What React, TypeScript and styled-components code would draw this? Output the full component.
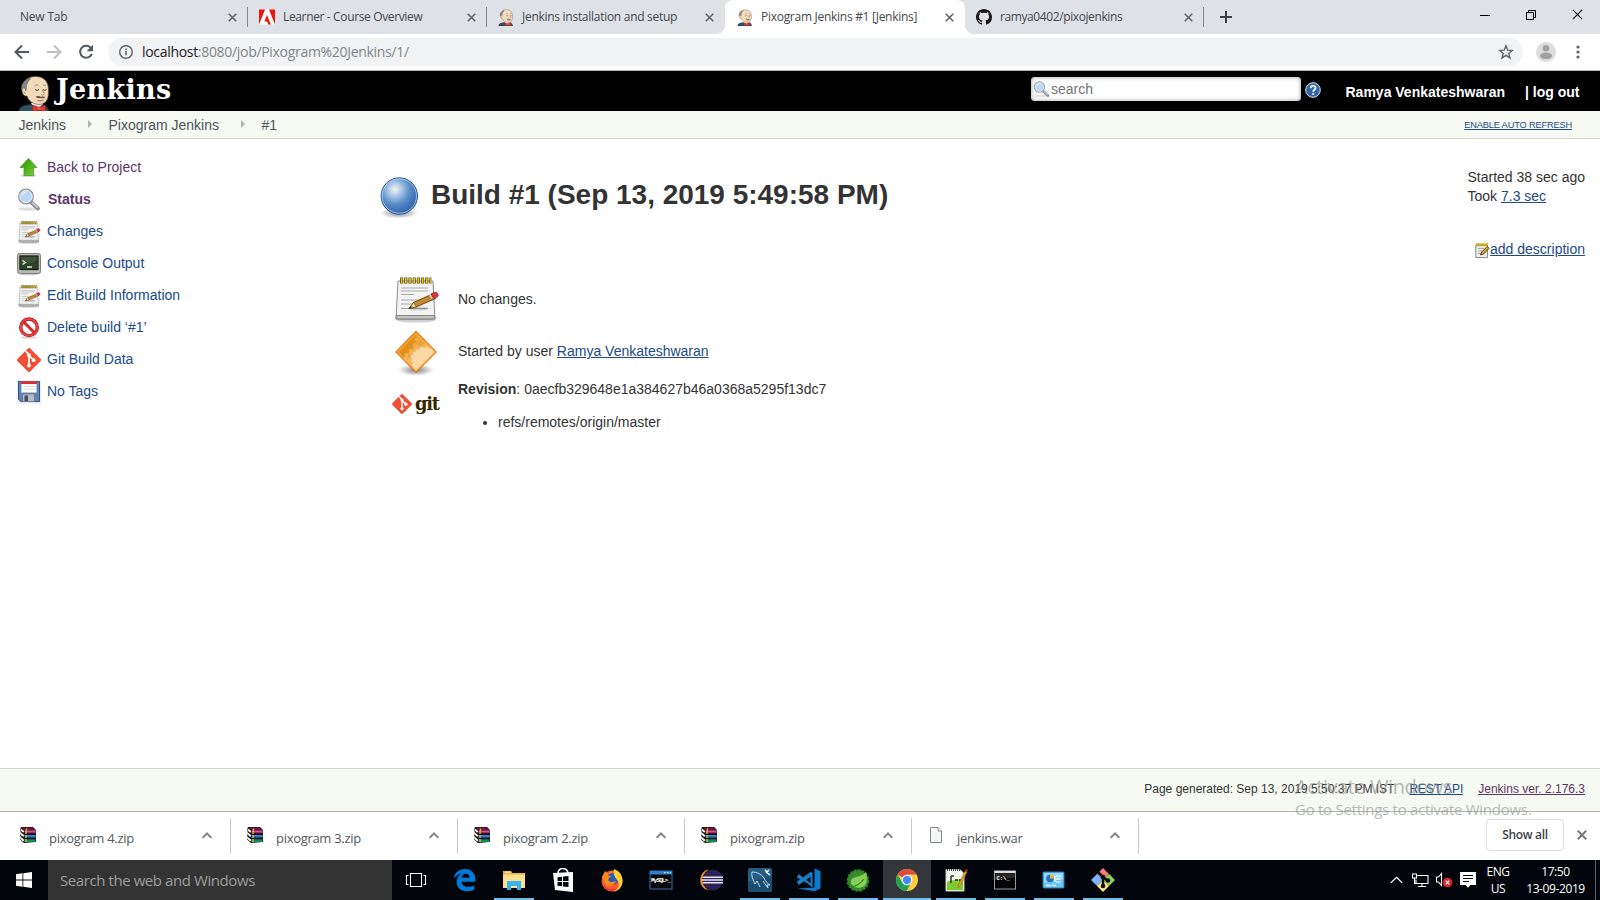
import React from "react";
import styled, { createGlobalStyle } from "styled-components";

const Global = createGlobalStyle`
  * { box-sizing: border-box; }
  html, body { margin: 0; padding: 0; background: #fff; overflow: hidden; }
  svg { display: block; flex: none; }
`;

const ui = `"Open Sans", "Noto Sans", sans-serif`;
const page = `"Liberation Sans", Arial, sans-serif`;

const Screen = styled.div`
  width: 1600px;
  height: 900px;
  display: flex;
  flex-direction: column;
  position: relative;
  overflow: hidden;
  white-space: nowrap;
  font-family: ${page};
  font-size: 14px;
  color: #333;
`;

/* Browser tabs */
const TabStrip = styled.div`
  height: 34px;
  flex: none;
  display: flex;
  background: #dee1e6;
`;
const Tab = styled.div<{ $w: number; $active?: boolean; $line?: boolean; $pad: number }>`
  width: ${(p) => p.$w}px;
  height: 34px;
  display: flex;
  align-items: center;
  padding: 0 11px 0 ${(p) => p.$pad}px;
  position: relative;
  background: ${(p) => (p.$active ? "#fff" : "transparent")};
  border-radius: 8px 8px 0 0;
  &::after {
    content: "";
    display: ${(p) => (p.$line ? "block" : "none")};
    position: absolute;
    right: 0;
    top: 7px;
    width: 1px;
    height: 20px;
    background: #80868b;
  }
`;
const Flare = styled.i<{ $side: "left" | "right" }>`
  position: absolute;
  bottom: 0;
  ${(p) => p.$side}: -8px;
  width: 8px;
  height: 8px;
  background: radial-gradient(circle at ${(p) => (p.$side === "left" ? "0 0" : "100% 0")}, transparent 7.5px, #fff 8px);
`;
const TabTitle = styled.span<{ $ls?: number; $gap?: number }>`
  flex: 1;
  margin-left: ${(p) => p.$gap ?? 0}px;
  font: 12px/16px ${ui};
  letter-spacing: ${(p) => p.$ls ?? -0.2}px;
  color: #45494d;
`;
const NewTab = styled.div`
  width: 44px;
  display: flex;
  align-items: center;
  justify-content: center;
`;
const WindowButtons = styled.div`
  margin-left: auto;
  display: flex;
  width: 138px;
  height: 29px;
`;
const WindowButton = styled.div`
  width: 46px;
  display: flex;
  align-items: center;
  justify-content: center;
`;

/* Browser toolbar */
const Toolbar = styled.div`
  height: 37px;
  flex: none;
  display: flex;
  align-items: center;
  background: #fff;
  border-bottom: 1px solid #b6bab6;
  padding: 0 11px 0 12px;
`;
const NavButton = styled.div`
  width: 32px;
  padding-left: 2px;
`;
const Omnibox = styled.div`
  width: 1415px;
  height: 28px;
  border-radius: 14px;
  background: #f1f3f4;
  display: flex;
  align-items: center;
  padding: 0 9px 0 10px;
`;
const Url = styled.span`
  flex: 1;
  margin-left: 8px;
  font: 14px/20px ${ui};
  letter-spacing: -0.31px;
  color: #80868b;
  b { font-weight: 400; color: #202124; }
`;
const ToolbarEnd = styled.div`
  margin-left: 13px;
  display: flex;
  align-items: center;
  gap: 20px;
`;

/* Jenkins header */
const Header = styled.header`
  height: 40px;
  flex: none;
  background: #000;
  display: flex;
  padding: 0 20.5px 0 18px;
  color: #fff;
`;
const Wordmark = styled.span`
  margin: 1px 0 0 5px;
  font: bold 27px/36px "DejaVu Serif", serif;
  letter-spacing: 0.3px;
`;
const SearchBox = styled.div`
  width: 270px;
  height: 24px;
  margin: 6px 0 0 auto;
  border-radius: 4px;
  background: #fff;
  box-shadow: inset 0 0 4px #999;
  display: flex;
  align-items: center;
  padding-left: 2px;
  color: #757575;
  gap: 1.5px;
`;
const Help = styled.div`
  margin: 11px 25px 0 4px;
`;
const HeaderLink = styled.b<{ $gap?: number }>`
  margin: 13px 0 0 ${(p) => p.$gap ?? 0}px;
  line-height: 16px;
`;

const Crumbs = styled.nav`
  height: 28px;
  flex: none;
  display: flex;
  align-items: center;
  background: #f6faf2;
  border-bottom: 1px solid #d3d7cf;
  padding: 0 28px 1px 18.5px;
  color: #4d545d;
`;
const Crumb = styled.span`
  line-height: 16px;
  padding-top: 1px;
`;
const CrumbArrow = styled.i`
  margin: 0 16.2px 0 22.3px;
  border: solid transparent;
  border-width: 4px 0 4px 4.5px;
  border-left-color: #b0b4b0;
`;
const AutoRefresh = styled.a`
  margin-left: auto;
  padding-top: 1px;
  font-size: 9.3px;
  letter-spacing: -0.19px;
  color: #204a87;
  text-decoration: underline;
`;

/* Page content */
const Content = styled.div`
  height: 629px;
  flex: none;
  display: flex;
`;
const Side = styled.aside`
  width: 379px;
  padding: 12px 0 0 17px;
`;
const Task = styled.div<{ $visited?: boolean; $current?: boolean }>`
  height: 32px;
  display: flex;
  align-items: center;
  gap: ${(p) => (p.$current ? 7 : 6)}px;
  color: ${(p) => (p.$visited ? "#5c3566" : "#204a87")};
  font-weight: ${(p) => (p.$current ? 700 : 400)};
  svg { position: relative; top: 1px; }
`;
const Main = styled.main`
  flex: 1;
  padding: 29px 15px 0 0;
  display: flex;
  justify-content: space-between;
`;
const Title = styled.h1`
  margin: 7px 0 0;
  height: 44px;
  display: flex;
  align-items: flex-start;
  gap: 12px;
  font-size: 28px;
  line-height: 40px;
  font-weight: 700;
  letter-spacing: -0.01px;
`;
const Facts = styled.div`
  margin-top: 54px;
  padding-left: 13px;
`;
const Fact = styled.div<{ $h: number }>`
  height: ${(p) => p.$h}px;
  display: flex;
  align-items: center;
`;
const FactIcon = styled.div<{ $drop?: number; $indent?: number }>`
  width: 66px;
  padding: ${(p) => p.$drop ?? 0}px 0 0 ${(p) => p.$indent ?? 0}px;
`;
const Link = styled.a`
  color: #204a87;
  text-decoration: underline;
`;
const Revision = styled.div`
  line-height: 18px;
  padding-top: 2px;
`;
const Refs = styled.ul`
  margin: 15px 0 0;
  padding-left: 40px;
`;
const GitLogo = styled.div`
  width: 66px;
  display: flex;
  align-items: center;
  gap: 3px;
  color: #362701;
  font: bold 19px/24px "DejaVu Serif", serif;
  letter-spacing: -1.3px;
`;
const GitWord = styled.span`
  padding-bottom: 3px;
  transform: scaleX(0.94);
  transform-origin: 0 50%;
`;
const Meta = styled.div`
  width: 117.5px;
  line-height: 19px;
`;
const Describe = styled.div`
  margin: 34px 0 0;
  display: flex;
  align-items: center;
  gap: 0.5px;
  justify-content: flex-end;
  svg { position: relative; top: 1px; }
`;

const Footer = styled.footer`
  height: 44px;
  flex: none;
  background: #f6faf2;
  border-top: 1px solid #d3d7cf;
  display: flex;
  justify-content: flex-end;
  gap: 15px;
  padding: 13px 15px 0 0;
  font-size: 12px;
  line-height: 14px;
  border-bottom: 1px solid #b0b3b0;
  a { text-decoration: underline; color: #204a87; }
  a + a { color: #5c3566; }
`;

/* Downloads shelf */
const Shelf = styled.div`
  height: 48px;
  flex: none;
  background: #fff;
  display: flex;
  align-items: flex-start;
  padding-top: 6px;
`;
const Download = styled.div`
  width: 227px;
  height: 36px;
  border-right: 1px solid #c9c9c9;
  display: flex;
  padding: 9px 18px 0 16px;
  &:first-child { width: 231px; padding-left: 20px; }
`;
const FileName = styled.span`
  flex: 1;
  margin: 2px 0 0 13px;
  font: 13px/18px ${ui};
  letter-spacing: -0.3px;
  color: #54575b;
`;
const ShowAll = styled.div`
  margin: 1px 13px 0 auto;
  width: 78px;
  height: 32px;
  border: 1px solid #dadce0;
  border-radius: 4px;
  text-align: center;
  font: 600 12px/29px ${ui};
  letter-spacing: -0.3px;
  color: #3c4043;
`;
const ShelfClose = styled.div`
  margin: 12px 13px 0 0;
`;

/* Windows taskbar */
const Taskbar = styled.div`
  height: 40px;
  flex: none;
  display: flex;
  background: #02050b;
  color: #fff;
  font-family: ${ui};
`;
const Start = styled.div`
  width: 48px;
  display: flex;
  align-items: center;
  justify-content: center;
`;
const TaskSearch = styled.div`
  width: 344px;
  background: #333;
  color: #9d9d9d;
  padding-left: 12px;
  font-size: 15px;
  line-height: 41px;
  letter-spacing: -0.42px;
`;
const Dock = styled.div`
  display: flex;
  margin-left: -0.4px;
`;
const DockItem = styled.div<{ $running?: boolean; $active?: boolean }>`
  width: 49.07px;
  height: 40px;
  display: flex;
  align-items: center;
  justify-content: center;
  position: relative;
  background: ${(p) => (p.$active ? "linear-gradient(#33373b, #33373b) center / 48px 40px no-repeat" : "none")};
  &::after {
    content: "";
    display: ${(p) => (p.$running ? "block" : "none")};
    position: absolute;
    bottom: 0;
    left: ${(p) => (p.$active ? 0.5 : 4.5)}px;
    right: ${(p) => (p.$active ? 0.5 : 4.5)}px;
    height: 2px;
    background: #76b9ed;
  }
`;
const Tray = styled.div`
  margin-left: auto;
  display: flex;
  align-items: center;
`;
const TrayIcon = styled.div`
  width: 24px;
  display: flex;
  justify-content: center;
`;
const TrayText = styled.div<{ $w: number }>`
  width: ${(p) => p.$w}px;
  text-align: center;
  font-size: 12px;
  line-height: 17px;
  letter-spacing: -0.4px;
`;
const Desktop = styled.div`
  width: 5px;
  height: 40px;
  border-left: 1px solid #5b5d60;
`;

const Watermark = styled.div`
  position: absolute;
  left: 1295px;
  top: 773px;
  color: rgba(140, 140, 140, 0.62);
  font-family: ${ui};
`;
const WatermarkTitle = styled.div`
  font-size: 20px;
  line-height: 28px;
  letter-spacing: -0.45px;
`;
const WatermarkText = styled.div`
  font-size: 15px;
  line-height: 16px;
  letter-spacing: -0.27px;
`;

const Cross = ({ size = 9, color = "#5f6368", w = 1.7 }) => (
  <svg width={size} height={size} viewBox="0 0 10 10">
    <path d="M.8.8l8.4 8.4M9.2.8L.8 9.2" stroke={color} strokeWidth={w} />
  </svg>
);

const Butler = ({ w, h }: { w: number; h: number }) => (
  <svg width={w} height={h} viewBox="0 0 33 37">
    <path d="M1 37c0-4 2-6 8-7l14-1c5 1 7 3 8 8z" fill="#335061" stroke="#1d2f3a" />
    <path d="M13 28l5 7 7-6-3-3z" fill="#fff" />
    <path d="M4 15C3.500 7 9 1.500 17.500 1.500c8 0 13 4.500 13 13.500 0 5 0 8-2.500 11.500-3 3.500-8 3.500-12 2-3.500-1.500-6-4-7-7.500-3 .5-5-2-5-6z" fill="#f2dabb" stroke="#5a4c40" strokeWidth=".7" />
    <path d="M11 3C6 5.500 3 9 3.500 15l1.200-1.500c.8-.8 2-.5 2.500.5l.6 2c.8-2 .2-3.500.7-5.500.7-2.700 2-5 4-6.800z" fill="#85888a" stroke="#4b4d4f" strokeWidth=".5" />
    <path d="M5.500 17c1 0 1.800 1 1.700 2" fill="none" stroke="#8a6a50" strokeWidth=".7" />
    <path d="M17 14.500c1 1 3 1 4 0M25 14.500c1 1 2.500 1 3.500 0" fill="none" stroke="#4a372c" strokeWidth="1" />
    <path d="M16.500 11c1-1.300 3-1.300 4-.8M25 10.500c1-.8 2.500-.5 3 .3M24.500 14.500c0 2.300 2.500 3.500 1.500 5-.7.700-2 .7-2.700.2" fill="none" stroke="#8a6f5a" strokeWidth=".7" />
    <path d="M17.500 21.800c2-1.200 4-.8 5.500.2 1.500-.8 3.500-.5 4.500.3-1 1-3 1-4.500.6-2 .6-4.300.3-5.500-1.100z" fill="#6b4c3c" />
    <path d="M19.500 25.500c2.500.8 4.500.3 6-.7" fill="none" stroke="#8c3b30" strokeWidth=".8" />
    <path d="M14.500 30l6.500 2.500 6.500-2.500v7h-1.500l-5-2-5 2h-1.500z" fill="#d83a36" stroke="#8c1b17" strokeWidth=".7" />
    <rect x="19.300" y="31.500" width="3.500" height="3.500" fill="#ef4d48" />
  </svg>
);

const Notepad = ({ size }: { size: number }) => (
  <svg width={size} height={size} viewBox="0 0 48 48">
    <ellipse cx="24" cy="45.500" rx="19" ry="2" fill="#000" opacity=".18" />
    <path d="M6 6h35l2 38h-39z" fill="#f3f3f2" stroke="#8b8d89" />
    <path d="M4 40.500h38.500l.5 3.500h-39z" fill="#c2c2c0" stroke="#6c6e6a" strokeWidth=".8" />
    <path d="M9 13h27M9 16h27M9 19.500h13M9 25h25M9 29h20M9 33.500h27" stroke="#aaa" strokeWidth="1.100" />
    <path d="M8 5.500h31.500" stroke="#5d5110" strokeWidth="6" strokeDasharray="3.200 1" />
    <path d="M8.800 5.500h31" stroke="#e0c62a" strokeWidth="5" strokeDasharray="1.600 2.600" />
    <ellipse cx="26" cy="33.500" rx="10" ry="2" opacity=".15" />
    <path d="M17 33.500l4.500-6 19-8.500 3 4.500-19.500 8.500z" fill="#c58a32" stroke="#5d3c0b" strokeWidth=".9" />
    <path d="M17 33.500l4.500-6 3 4.500z" fill="#edd5a4" stroke="#5d3c0b" strokeWidth=".6" />
    <path d="M17 33.500l2-2.500 1 1.500z" fill="#222" />
    <path d="M39 19l3-1.500c3-1.500 6 3 3 4.500L42 23.500z" fill="#e5333a" stroke="#7e1d20" strokeWidth=".7" />
    <path d="M37.500 19l2.500 4.500" stroke="#ccc" strokeWidth="1.600" />
  </svg>
);

const NoteSmall = () => (
  <svg width="15" height="16" viewBox="0 0 15 16">
    <path d="M.8 2h11.700v12.500H.8z" fill="#eeeeec" stroke="#7c7e7a" strokeWidth=".9" />
    <path d="M3 5.500h6M3 8h4M3 10.500h3" stroke="#a6a8a4" />
    <path d="M1 1.800h12" stroke="#8e7b12" strokeWidth="2.600" />
    <path d="M1.400 1.600h11.500" stroke="#f2d92f" strokeWidth="2.400" strokeDasharray="1.200 .8" />
    <path d="M5.500 12l1.200-3 5.500-5.500 2 1.800-5.700 5.700z" fill="#d99b3a" stroke="#3b2706" strokeWidth=".8" />
  </svg>
);

const GitMark = ({ size }: { size: number }) => (
  <svg width={size} height={size} viewBox="0 0 24 24">
    <path d="M10.800.600a1.700 1.700 0 0 1 2.400 0l10.200 10.200a1.700 1.700 0 0 1 0 2.400L13.200 23.400a1.700 1.700 0 0 1-2.400 0L.600 13.200a1.700 1.700 0 0 1 0-2.400z" fill="#f05033" />
    <path d="M8.500 3l3.500 3.700V17.500M12 7.500l4.600 4.600" stroke="#fff" strokeWidth="1.700" fill="none" />
    <circle cx="12" cy="7.200" r="1.900" fill="#fff" />
    <circle cx="12" cy="17.600" r="1.900" fill="#fff" />
    <circle cx="16.700" cy="12.200" r="1.900" fill="#fff" />
  </svg>
);

const ArrowUp = () => (
  <svg width="24" height="24" viewBox="0 0 24 24">
    <defs>
      <linearGradient id="up" x2="1" y2="1">
        <stop stopColor="#2f8f05" />
        <stop offset=".6" stopColor="#58b81f" />
        <stop offset="1" stopColor="#85d84b" />
      </linearGradient>
    </defs>
    <ellipse cx="11.500" cy="19.500" rx="8" ry="1.600" opacity=".16" />
    <path d="M11.500 2.500l8.500 9h-3.500V19.500h-9.500v-8H3z" fill="url(#up)" stroke="#4a9e1b" strokeWidth=".8" />
  </svg>
);

const Magnifier = ({ size }: { size: number }) => (
  <svg width={size} height={size} viewBox="0 0 24 24">
    <ellipse cx="11" cy="21" rx="10" ry="1.800" opacity=".12" />
    <path d="M14.500 14.500l6.500 6" stroke="#85878a" strokeWidth="3.800" strokeLinecap="round" />
    <path d="M15 14.500l6 5.300" stroke="#c9cbcd" strokeWidth="1.800" />
    <circle cx="9" cy="8.500" r="7.200" fill="#a9cdf2" stroke="#94979b" strokeWidth="1.600" />
    <circle cx="9" cy="8.500" r="6.200" fill="#bcd8f5" stroke="#eef3f8" strokeWidth=".9" />
    <path d="M4.500 8c0-3 3-5 6-4.500C8.500 5 5.500 6 4.500 8z" fill="#e9f3fd" />
  </svg>
);

const Terminal = () => (
  <svg width="24" height="24" viewBox="0 0 24 24">
    <ellipse cx="12" cy="22" rx="10" ry="1.300" opacity=".2" />
    <rect x=".5" y="1.500" width="23" height="20" rx="2" fill="#b8bab5" stroke="#80827e" />
    <rect x="3" y="4" width="18" height="13.500" fill="#3d5338" stroke="#17230f" strokeWidth="1.300" />
    <path d="M3.500 12c7 1 12-1 17-4v9h-17z" fill="#253a20" opacity=".7" />
    <path d="M5.500 8.500l3 2-3 2M10 15h5" stroke="#e5f2df" strokeWidth="1.300" fill="none" />
  </svg>
);

const NoEntry = () => (
  <svg width="24" height="24" viewBox="0 0 24 24">
    <ellipse cx="12" cy="21.500" rx="8" ry="1.300" opacity=".15" />
    <circle cx="12" cy="11.300" r="8.300" fill="#fff" stroke="#b81414" strokeWidth="3.400" />
    <circle cx="12" cy="11.300" r="8.300" fill="none" stroke="#e34347" strokeWidth="2" />
    <path d="M6.500 5.800l11 11" stroke="#d92226" strokeWidth="2.800" />
  </svg>
);

const Floppy = () => (
  <svg width="24" height="24" viewBox="0 0 24 24">
    <rect width="24" height="24" fill="#eceef1" />
    <path d="M1.500 1.500h21v20H4l-2.500-2z" fill="#5d84be" stroke="#33547f" />
    <rect x="4.500" y="2" width="15" height="10.500" fill="#fdfdfd" stroke="#c5cad3" strokeWidth=".6" />
    <rect x="4" y="1.500" width="16" height="2.500" fill="#dc2b2b" />
    <path d="M6 6.500h12M6 9h12" stroke="#d5d8dd" strokeWidth=".8" />
    <rect x="5.500" y="14" width="12" height="7.500" fill="#b9bdc3" stroke="#667080" strokeWidth=".7" />
    <rect x="7.500" y="15.500" width="3.500" height="5.500" fill="#3b4c66" />
  </svg>
);

const BlueBall = () => (
  <svg width="40" height="44" viewBox="0 0 40 44">
    <defs>
      <radialGradient id="ball" cx=".38" cy=".32" r=".7">
        <stop stopColor="#f5f8e9" />
        <stop offset=".22" stopColor="#b5cfe9" />
        <stop offset=".58" stopColor="#5a8dca" />
        <stop offset="1" stopColor="#2c62a6" />
      </radialGradient>
      <radialGradient id="shade">
        <stop stopOpacity=".5" />
        <stop offset="1" stopOpacity="0" />
      </radialGradient>
    </defs>
    <ellipse cx="20" cy="38" rx="19" ry="5.500" fill="url(#shade)" />
    <circle cx="20.300" cy="21" r="18.200" fill="url(#ball)" stroke="#24559b" />
    <circle cx="20.300" cy="21" r="17.200" fill="none" stroke="#b8d2ee" strokeWidth=".8" />
  </svg>
);

const OrangeGear = () => (
  <svg width="48" height="48" viewBox="0 0 48 48">
    <ellipse cx="23" cy="41" rx="18" ry="6" fill="url(#shade)" />
    <path d="M23 2.500L43 23 23 43 3 23z" fill="#f5b55e" />
    <path d="M21 4.500L3.500 23l8 8c-1-2 0-3 1-4l-1-2 2-1 2 1 1-2-1-2 2-1 2 0 1-2-1-2 2-2 2 1 0-3-2-1 1-2 2 0 0-3z" fill="#e3901a" />
    <path d="M13 32l1-3 3 0 0-3-2-2 2-3 3 1 2-3-1-3 3-1 2 3 3-1 2-2 6 2L24 4.500l-1 3 2 1.500-1 3 1 3-3 2-2 0-1 4-3 1-1 4z" fill="#eda338" />
    <path d="M20 39l-1-3 1-2-2-2 1-2-1-3 2-1 0-3 2 0 2-3 2 1 2-3 3 1 3-1 3 2 4-1 1.500 4L23 42z" fill="#fcd8a4" />
    <path d="M23 2.500L43 23 23 43 3 23z" fill="none" stroke="#f57900" strokeWidth="1.300" />
    <path d="M23 4.200L41.300 23 23 41.300 4.700 23z" fill="none" stroke="#fcd39d" strokeWidth=".7" />
  </svg>
);

const Archive = () => (
  <svg width="16" height="16" viewBox="0 0 16 16">
    <path d="M1 0h12l3 3-1 1.500 1 1.500v9L4 16l-4-3.500 1-2-1-2.500 1-2-1-3z" fill="#111" />
    <path d="M1 .5h11l3 2.500H4.500z" fill="#7a1032" />
    <path d="M4.500 3.500H16v2.700H4.500z" fill="#b52372" />
    <path d="M5 4.200h10" stroke="#e58bbd" strokeWidth=".7" />
    <path d="M4.500 8H16v2.700H4.500z" fill="#1c67ac" />
    <path d="M5 8.800h10" stroke="#6bb4ec" strokeWidth=".7" />
    <path d="M4.500 12.300H15.500V15H4.500z" fill="#148a62" />
    <path d="M.8 2.500l3 2.500M.8 6.500l3 2.700M.8 11l3 2.800" stroke="#f5f5f5" strokeWidth="2" />
    <path d="M6.500 1.500v2M6 3.500v3.500M6 8v3M6 12v3" stroke="#f0c63a" strokeWidth="1.200" />
  </svg>
);

const Page = () => (
  <svg width="16" height="16" viewBox="0 0 16 16">
    <path d="M2.500.5h7.500l3.500 3.500v11.500h-11z" fill="#f5f6f7" stroke="#85888b" />
    <path d="M10 .5v3.500h3.500" fill="#fff" stroke="#85888b" />
  </svg>
);

const Chevron = ({ color, w = 10, s = 1.8 }: { color: string; w?: number; s?: number }) => (
  <svg width={w} height={w * 0.6} viewBox="0 0 10 6">
    <path d="M.6 5.300L5 1l4.400 4.300" fill="none" stroke={color} strokeWidth={s} />
  </svg>
);

const tabs: { title: string; w: number; pad: number; icon?: React.ReactNode; line?: boolean; active?: boolean; ls: number }[] = [
  { title: "New Tab", w: 248, pad: 20, line: true, ls: -0.2 },
  {
    title: "Learner - Course Overview", w: 239, pad: 11, line: true, ls: -0.36,
    icon: (
      <svg width="16" height="16" viewBox="0 0 16 16">
        <rect width="16" height="15" y=".5" fill="#fff" />
        <path d="M0 .5h6L0 15.500zM10 .5h6v15zM8 6l3.800 9.500H9.300l-1.100-3H5.400z" fill="#f0120c" />
      </svg>
    ),
  },
  { title: "Jenkins installation and setup", w: 238, pad: 11, ls: -0.28, icon: <Butler w={16} h={17} /> },
  { title: "Pixogram Jenkins #1 [Jenkins]", w: 240, pad: 12, active: true, ls: -0.28, icon: <Butler w={16} h={17} /> },
  {
    title: "ramya0402/pixojenkins", w: 239, pad: 11, line: true, ls: -0.4,
    icon: (
      <svg width="16" height="16" viewBox="0 0 16 16">
        <path fill="#191717" d="M8 0C3.580 0 0 3.580 0 8c0 3.540 2.290 6.530 5.470 7.590.400.070.550-.170.550-.380 0-.190-.010-.820-.010-1.490-2.010.370-2.530-.490-2.690-.940-.090-.230-.480-.940-.820-1.130-.280-.150-.680-.520-.010-.530.630-.010 1.080.580 1.230.820.720 1.210 1.870.870 2.330.660.070-.520.280-.870.510-1.070-1.780-.200-3.640-.890-3.640-3.950 0-.870.310-1.590.820-2.150-.080-.200-.360-1.020.080-2.120 0 0 .670-.210 2.200.820.640-.180 1.320-.270 2-.270s1.360.090 2 .270c1.530-1.040 2.200-.820 2.200-.820.440 1.100.160 1.920.080 2.120.510.560.820 1.270.820 2.150 0 3.070-1.870 3.750-3.650 3.950.290.250.540.730.540 1.480 0 1.070-.010 1.930-.010 2.200 0 .210.150.460.550.380A8.010 8.010 0 0 0 16 8c0-4.420-3.580-8-8-8z" />
      </svg>
    ),
  },
];

const tasks: { label: string; icon: React.ReactNode; visited?: boolean; current?: boolean }[] = [
  { label: "Back to Project", icon: <ArrowUp />, visited: true },
  { label: "Status", icon: <Magnifier size={24} />, visited: true, current: true },
  { label: "Changes", icon: <Notepad size={24} /> },
  { label: "Console Output", icon: <Terminal /> },
  { label: "Edit Build Information", icon: <Notepad size={24} /> },
  { label: "Delete build ‘#1’", icon: <NoEntry /> },
  { label: "Git Build Data", icon: <GitMark size={24} /> },
  { label: "No Tags", icon: <Floppy /> },
];

const apps: { name: string; running?: boolean; active?: boolean; art: React.ReactNode }[] = [
  {
    name: "views",
    art: <path d="M6.500 5.500h11v13h-11zM4.500 7.500h-2v9h2M19.500 7.500h2v9h-2" fill="none" stroke="#fff" strokeWidth="1.100" />,
  },
  {
    name: "edge",
    art: <path d="M1 10.500C1.500 4.500 6 1 12 1c6.500 0 10.500 4.600 10.500 10.500v2.300H8.600c.2 3.500 3.300 5 6.600 5 2.300 0 4.300-.6 6-1.600v4.600c-2 1-4.500 1.500-7.200 1.500C7.500 23.300 3.600 19.500 3.600 14c0-3.800 2.200-7 5.700-8.400C5.500 6 2.800 8 1 10.500zM8.800 9.700h7.700c0-2.500-1.300-4-3.700-4-2.300 0-3.700 1.700-4 4z" fill="#0078d7" />,
  },
  {
    name: "explorer", running: true,
    art: (
      <>
        <path d="M1 3h8l1.500 2H23v15H1z" fill="#e8b64a" />
        <path d="M1 6.500h22V20H1z" fill="#fbe08f" />
        <path d="M5 13h14v9h-4v-4H9v4H5z" fill="#35b4ee" />
        <path d="M3 4.200h5" stroke="#fdf2c7" />
      </>
    ),
  },
  {
    name: "store",
    art: (
      <>
        <path d="M7 5c.5-6 9-6 10 0" fill="none" stroke="#fff" strokeWidth="1.500" />
        <path d="M2 5l20-1v20L4 22z" fill="#fff" />
        <path d="M6.500 9.200l4.500-.5v4.300H6.500zM12 8.600l5.500-.6v5H12zM6.500 14H11v4.300l-4.500-.5zM12 14h5.500v5l-5.500-.6z" fill="#02050b" />
      </>
    ),
  },
  {
    name: "firefox",
    art: (
      <>
        <circle cx="12" cy="13" r="10.500" fill="#ff5a26" />
        <path d="M2 9L5 3l3 3 3-3 3 4-4 5 3 5-6 2z" fill="#ff8b16" />
        <circle cx="12.500" cy="11" r="6" fill="#2d5bb8" />
        <path d="M14 1c6 2 9 7 8.500 13-.5 5-4 9-9 9.500 5-3 7-7 4-11-2-3-5-6-3.500-11.500z" fill="#ffcf33" />
        <path d="M4 7c3-1 4 1 7 1-1 2-3 2-3 4 2 3 5 2 8 1-1 5-9 6-12 1z" fill="#ff8a1c" />
        <path d="M3 15c3 6 9 8 15 5-4 5-13 4-15-5z" fill="#ef2f4b" />
      </>
    ),
  },
  {
    name: "mysql",
    art: (
      <>
        <rect x="1" y="3" width="22" height="18" fill="#05070a" stroke="#3f70a0" />
        <rect x="1" y="3" width="22" height="3.500" fill="#2f80d0" />
        <path d="M15 4.700h1.500M18 4.700h1.500M21 4.700h1" stroke="#fff" />
        <text x="2" y="14" fontSize="6.200" fontFamily="Liberation Mono, monospace" fontWeight="700" fill="#fff" textLength="20">MySQL&gt;_</text>
      </>
    ),
  },
  {
    name: "eclipse",
    art: (
      <>
        <path d="M10 1.200a11 11 0 0 0 0 21.600A13 13 0 0 1 10 1.200z" fill="#f7941e" />
        <circle cx="13.500" cy="12" r="10.500" fill="#2c2255" />
        <path d="M3.500 9.300h20.500M3 12h21M3.500 14.700h20.500" stroke="#e8e6f2" strokeWidth="1.500" />
      </>
    ),
  },
  {
    name: "workbench", running: true,
    art: (
      <>
        <rect x="0" y="0" width="24" height="24" rx="2" fill="#255d85" />
        <path d="M0 14l24-6v14a2 2 0 0 1-2 2H2a2 2 0 0 1-2-2z" fill="#1b4d73" />
        <path d="M7 16c-2-4-4-9-3-12 5 0 9 2 12 6 1 3 3 5 6 7l-3 0 1 3-5-7M7 16l2-3 3 6" fill="none" stroke="#d7e6f0" strokeWidth=".9" />
        <path d="M17 2l2 2 2-2M18 4l4 3" stroke="#fff" strokeWidth="1.500" fill="none" />
      </>
    ),
  },
  {
    name: "code", running: true,
    art: (
      <>
        <path d="M17.500.5L23.500 3v17.500l-6 2.800L.5 20.500l17-1z" fill="#0a7acc" />
        <path d="M14.500 4.500v13L2 7.500 1 9l11 6M14.500 4.500L1 14l1 1.500L14.500 7" fill="none" stroke="#1b7fc6" strokeWidth="2" />
      </>
    ),
  },
  {
    name: "spring", running: true,
    art: (
      <>
        <circle cx="12" cy="12.500" r="10.300" fill="#378b2c" stroke="#2f8427" strokeWidth="2" strokeDasharray="3 1" />
        <path d="M20 4c2 9 1 14-5 15.500-4 .8-10-.5-10-5.500C5 7 15 10.500 20 4z" fill="#86cf55" />
        <path d="M5 19c6-1 10-4 13-8" stroke="#2e7a23" strokeWidth="1.200" fill="none" />
      </>
    ),
  },
  {
    name: "chrome", running: true, active: true,
    art: (
      <>
        <circle cx="12" cy="12" r="11" fill="#fccd3d" />
        <path d="M12 12L2.500 6.500A11 11 0 0 1 21.500 6.500H12z" fill="#dd4b3e" />
        <path d="M2.500 6.500A11 11 0 0 0 11.500 23l4.800-8.500L12 12l-4.700 2.500z" fill="#22a05a" />
        <circle cx="12" cy="12" r="5.300" fill="#fff" />
        <circle cx="12" cy="12" r="4.200" fill="#4688f1" />
      </>
    ),
  },
  {
    name: "editor", running: true,
    art: (
      <>
        <path d="M2 1.500h14l4 4V23H2z" fill="#f4f7ee" stroke="#c8ccc0" />
        <path d="M3 14c5-3 11-1 16-4v12H3z" fill="#7ccb2f" />
        <path d="M3 2h14" stroke="#4a4a4a" strokeDasharray="1 1" strokeWidth="2" />
        <path d="M7 8v7M7 8h3M11 12h3M15 12h2" stroke="#26301b" strokeWidth="1.400" />
        <path d="M21 3l2 1-7 14-2 1.500.3-2.500z" fill="#e7a32c" stroke="#94591a" strokeWidth=".5" />
        <path d="M21 3l1-2 2 1-1 2z" fill="#a4302a" />
      </>
    ),
  },
  {
    name: "cmd", running: true,
    art: (
      <>
        <rect x="1.500" y="3" width="21" height="18" fill="#050505" stroke="#9b9b9b" />
        <path d="M1.500 4h21" stroke="#dcdcdc" strokeWidth="2.200" />
        <path d="M2 12c7-1 14-1 20-3V6H2z" fill="#272727" />
        <text x="3.500" y="11.500" fontSize="5.500" fontFamily="Liberation Mono, monospace" fontWeight="700" fill="#fff">C:\_</text>
      </>
    ),
  },
  {
    name: "panel", running: true,
    art: (
      <>
        <rect x="1" y="4" width="21" height="16" rx="1" fill="#6cc2f2" stroke="#2a80b8" />
        <path d="M2 5h19v6L2 15z" fill="#93d6f8" />
        <circle cx="8" cy="10.500" r="3.800" fill="#1e72c6" />
        <path d="M8 10.500V6.500a4 4 0 0 1 4 4z" fill="#fbb034" />
        <path d="M14 8h5M14 11h5M14 14h5M13 8v6" stroke="#fff" strokeWidth="1.200" />
        <path d="M4 17.500h5M10 17.500h4" stroke="#d4f0ff" strokeWidth="1.500" />
      </>
    ),
  },
  {
    name: "gitbash", running: true,
    art: (
      <>
        <path d="M12 0l6 6-6 6-6-6z" fill="#f57a74" />
        <path d="M6 6l6 6-6 6-6-6z" fill="#80b3ff" />
        <path d="M18 6l6 6-6 6-6-6z" fill="#8dd35f" />
        <path d="M12 12l6 6-6 6-6-6z" fill="#ffe680" />
        <path d="M7 4l5 5v9M12 9l5 4" stroke="#0b0e12" strokeWidth="2.500" fill="none" />
        <circle cx="12" cy="9" r="2.300" fill="#0b0e12" />
        <circle cx="12" cy="18" r="2.300" fill="#0b0e12" />
        <circle cx="17" cy="12.500" r="2.300" fill="#0b0e12" />
      </>
    ),
  },
];

export default function App() {
  return (
    <Screen>
      <Global />
      <TabStrip>
        {tabs.map((t) => (
          <Tab key={t.title} $w={t.w} $pad={t.pad} $active={t.active} $line={t.line}>
            {t.active && <Flare $side="left" />}
            {t.active && <Flare $side="right" />}
            {t.icon}
            <TabTitle $ls={t.ls} $gap={t.icon ? 8 : 0}>{t.title}</TabTitle>
            <Cross />
          </Tab>
        ))}
        <NewTab>
          <svg width="12" height="12" viewBox="0 0 12 12"><path d="M6 0v12M0 6h12" stroke="#3c4043" strokeWidth="2" /></svg>
        </NewTab>
        <WindowButtons>
          <WindowButton><svg width="10" height="10" viewBox="0 0 10 10"><path d="M0 5.500h10" stroke="#000" /></svg></WindowButton>
          <WindowButton><svg width="10" height="10" viewBox="0 0 10 10"><path d="M.5 2.500h7v7h-7zM2.500 2.500v-2h7v7h-2" fill="none" stroke="#000" /></svg></WindowButton>
          <WindowButton><Cross size={11} color="#000" w={1} /></WindowButton>
        </WindowButtons>
      </TabStrip>

      <Toolbar>
        <NavButton>
          <svg width="16" height="16" viewBox="0 0 16 16"><path d="M15 8H2M8 1.500L1.500 8 8 14.500" fill="none" stroke="#55595e" strokeWidth="2" /></svg>
        </NavButton>
        <NavButton>
          <svg width="16" height="16" viewBox="0 0 16 16"><path d="M1 8h13M8 1.500L14.500 8 8 14.500" fill="none" stroke="#bcbec1" strokeWidth="2" /></svg>
        </NavButton>
        <NavButton>
          <svg width="16" height="16" viewBox="0 0 16 16">
            <path d="M13 4.200A6 6 0 1 0 13.800 9.800" fill="none" stroke="#55595e" strokeWidth="2" />
            <path d="M15 .8v6.400H8.600z" fill="#55595e" />
          </svg>
        </NavButton>
        <Omnibox>
          <svg width="16" height="16" viewBox="0 0 16 16">
            <circle cx="8" cy="8" r="6.300" fill="none" stroke="#5f6368" strokeWidth="1.400" />
            <path d="M8 7v4.200M8 4.500v1.500" stroke="#5f6368" strokeWidth="1.500" />
          </svg>
          <Url><b>localhost</b>:8080/job/Pixogram%20Jenkins/1/</Url>
          <svg width="16" height="16" viewBox="0 0 16 16">
            <path d="M8 1.800l1.700 4.300 4.600.3-3.500 3 1.100 4.500L8 11.400l-3.900 2.500 1.100-4.500-3.500-3 4.600-.3z" fill="none" stroke="#5f6368" strokeWidth="1.400" />
          </svg>
        </Omnibox>
        <ToolbarEnd>
          <svg width="20" height="20" viewBox="0 0 20 20">
            <circle cx="10" cy="10" r="10" fill="#dcdcdc" />
            <circle cx="10" cy="6.300" r="3.200" fill="#a0a0a0" />
            <ellipse cx="10" cy="13.800" rx="6" ry="3.300" fill="#a0a0a0" />
          </svg>
          <svg width="4" height="14" viewBox="0 0 4 14">
            <circle cx="2" cy="2" r="1.600" fill="#5f6368" /><circle cx="2" cy="7" r="1.600" fill="#5f6368" /><circle cx="2" cy="12" r="1.600" fill="#5f6368" />
          </svg>
        </ToolbarEnd>
      </Toolbar>

      <Header>
        <svg width="33" height="40" viewBox="0 0 33 40"><g transform="translate(0 4)"><Butler w={33} h={37} /></g></svg>
        <Wordmark>Jenkins</Wordmark>
        <SearchBox><Magnifier size={17} />search</SearchBox>
        <Help>
          <svg width="16" height="16" viewBox="0 0 16 16">
            <circle cx="8" cy="8" r="7.300" fill="#3465a4" stroke="#dbe5f1" />
            <path d="M5.600 6.200C5.600 3 10.600 3 10.600 6c0 1.700-2.400 1.800-2.400 3.700M8.200 11v1.800" fill="none" stroke="#fff" strokeWidth="1.700" />
          </svg>
        </Help>
        <HeaderLink>Ramya Venkateshwaran</HeaderLink>
        <HeaderLink $gap={20}>| log out</HeaderLink>
      </Header>
      <Crumbs>
        <Crumb>Jenkins</Crumb><CrumbArrow />
        <Crumb>Pixogram Jenkins</Crumb><CrumbArrow />
        <Crumb>#1</Crumb>
        <AutoRefresh>ENABLE AUTO REFRESH</AutoRefresh>
      </Crumbs>

      <Content>
        <Side>
          {tasks.map((t) => (
            <Task key={t.label} $visited={t.visited} $current={t.current}>{t.icon}{t.label}</Task>
          ))}
        </Side>
        <Main>
          <div>
            <Title><BlueBall />Build #1 (Sep 13, 2019 5:49:58 PM)</Title>
            <Facts>
              <Fact $h={52}><FactIcon><Notepad size={48} /></FactIcon>No changes.</Fact>
              <Fact $h={52}><FactIcon $drop={4} $indent={1}><OrangeGear /></FactIcon><span>Started by user <Link>Ramya Venkateshwaran</Link></span></Fact>
              <Fact $h={54}>
                <GitLogo><GitMark size={20} /><GitWord>git</GitWord></GitLogo>
                <Revision>
                  <b>Revision</b>: 0aecfb329648e1a384627b46a0368a5295f13dc7
                  <Refs><li>refs/remotes/origin/master</li></Refs>
                </Revision>
              </Fact>
            </Facts>
          </div>
          <Meta>
            <div>Started 38 sec ago</div>
            <div>Took <Link>7.3 sec</Link></div>
            <Describe><NoteSmall /><Link>add description</Link></Describe>
          </Meta>
        </Main>
      </Content>
      <Footer>
        <span>Page generated: Sep 13, 2019 5:50:37 PM IST</span>
        <a>REST API</a>
        <a>Jenkins ver. 2.176.3</a>
      </Footer>

      <Shelf>
        {["pixogram 4.zip", "pixogram 3.zip", "pixogram 2.zip", "pixogram.zip", "jenkins.war"].map((f) => (
          <Download key={f}>
            {f.endsWith("zip") ? <Archive /> : <Page />}
            <FileName>{f}</FileName>
            <svg width="10" height="16" viewBox="0 0 10 16"><path d="M.6 10.800L5 6.500l4.400 4.300" fill="none" stroke="#80868b" strokeWidth="2" /></svg>
          </Download>
        ))}
        <ShowAll>Show all</ShowAll>
        <ShelfClose><Cross size={10} color="#75797d" w={2} /></ShelfClose>
      </Shelf>

      <Taskbar>
        <Start>
          <svg width="16" height="16" viewBox="0 0 16 16"><path d="M0 2.200l6.500-.9v6.300H0zM7.300 1.200L16 0v7.600H7.300zM0 8.400h6.500v6.300L0 13.800zM7.300 8.400H16V16l-8.700-1.200z" fill="#fff" /></svg>
        </Start>
        <TaskSearch>Search the web and Windows</TaskSearch>
        <Dock>
          {apps.map((a) => (
            <DockItem key={a.name} $running={a.running} $active={a.active}>
              <svg width="24" height="24" viewBox="0 0 24 24">{a.art}</svg>
            </DockItem>
          ))}
        </Dock>
        <Tray>
          <TrayIcon><Chevron color="#fff" w={13} s={1} /></TrayIcon>
          <TrayIcon>
            <svg width="17" height="15" viewBox="0 0 17 15"><path d="M5 2.500h11v8H4v-4M10 10.500v3M6 13.500h8M.5 1h4v4h-4zM2.500 5v5.500H4" fill="none" stroke="#fff" strokeWidth="1.100" /></svg>
          </TrayIcon>
          <TrayIcon>
            <svg width="18" height="16" viewBox="0 0 18 16">
              <path d="M1.500 5h2l3-3.500v12L3.500 10h-2z" fill="none" stroke="#fff" strokeWidth="1.100" />
              <circle cx="12.500" cy="10.500" r="4.800" fill="#d9252b" />
              <path d="M10.700 8.700l3.600 3.600M14.300 8.700l-3.600 3.600" stroke="#fff" strokeWidth="1.100" />
            </svg>
          </TrayIcon>
          <TrayIcon>
            <svg width="16" height="16" viewBox="0 0 16 16"><path d="M0 0h16v13h-5.500L8 15.800 5.500 13H0z" fill="#fff" /><path d="M3 3.500h10M3 6.500h10M3 9.500h6" stroke="#02050b" strokeWidth="1.100" /></svg>
          </TrayIcon>
          <TrayText $w={36}>ENG<br />US</TrayText>
          <TrayText $w={79}>17:50<br />13-09-2019</TrayText>
          <Desktop />
        </Tray>
      </Taskbar>

      <Watermark>
        <WatermarkTitle>Activate Windows</WatermarkTitle>
        <WatermarkText>Go to Settings to activate Windows.</WatermarkText>
      </Watermark>
    </Screen>
  );
}
